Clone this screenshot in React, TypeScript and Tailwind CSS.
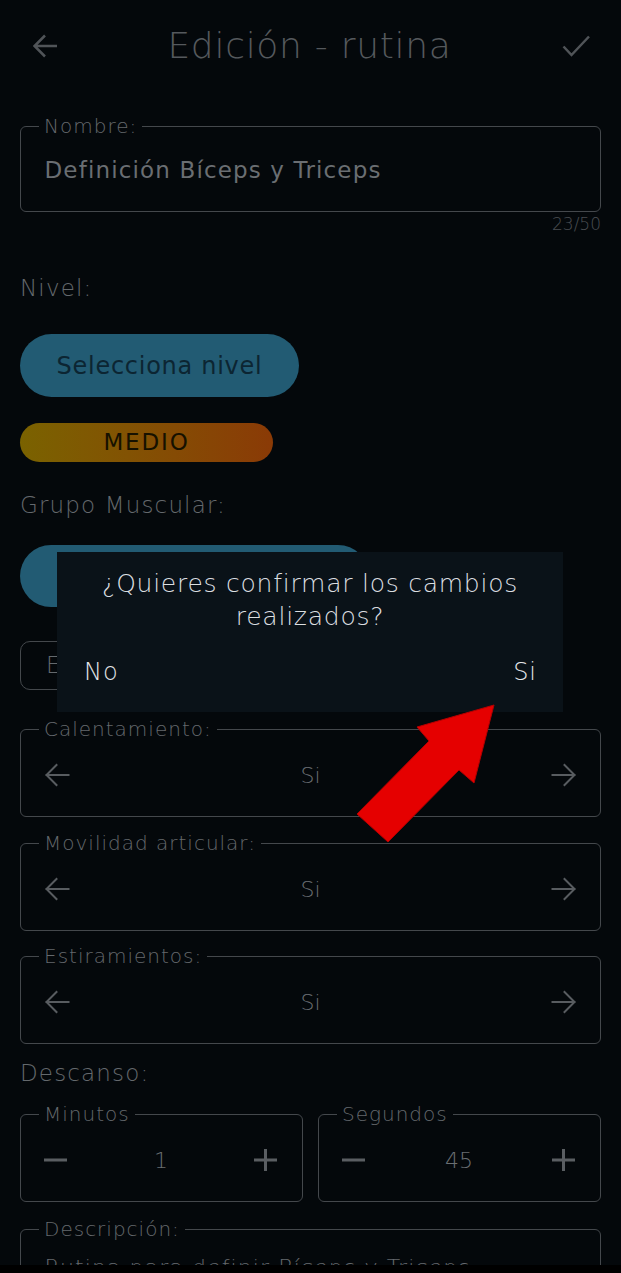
import type { ReactNode } from 'react';

const FONT = { fontFamily: '"DejaVu Sans", "Open Sans", sans-serif' };

function ArrowIcon({ dir, className }: { dir: 'left' | 'right'; className?: string }) {
  return (
    <svg viewBox="0 0 26 24" className={className} fill="none" stroke="currentColor" strokeWidth="2" strokeLinecap="square">
      {dir === 'left' ? (
        <path d="M2.5 12H24.5M12.5 2L2.5 12L12.5 22" />
      ) : (
        <path d="M23.5 12H1.5M13.5 2L23.5 12L13.5 22" />
      )}
    </svg>
  );
}

function Field({ label, children, className }: { label: string; children: ReactNode; className?: string }) {
  return (
    <fieldset className={`rounded-[6px] border-[1.5px] border-[#44484c] ${className ?? ''}`}>
      <legend className="ml-[18px] px-[5px] text-[20px] leading-[24px] font-extralight tracking-[0.05em] text-[#64696d]">
        {label}
      </legend>
      {children}
    </fieldset>
  );
}

function Toggle({ label, className }: { label: string; className?: string }) {
  return (
    <Field label={label} className={className}>
      <div className="mt-[19px] mb-[26px] flex h-[30px] items-center px-[23px] text-[#585c60]">
        <ArrowIcon dir="left" className="h-[24px] w-[26px]" />
        <span className="flex-1 text-center text-[22px] font-extralight text-[#6a6e72]">Si</span>
        <ArrowIcon dir="right" className="h-[24px] w-[26px]" />
      </div>
    </Field>
  );
}

function Stepper({ label, value }: { label: string; value: string }) {
  return (
    <Field label={label} className="flex-1">
      <div className="mt-[19px] mb-[26px] flex h-[30px] items-center pl-[23px] pr-[24px] text-[#5a5e62]">
        <svg viewBox="0 0 24 24" className="h-[24px] w-[24px]" stroke="currentColor" strokeWidth="3">
          <path d="M0 12H23" />
        </svg>
        <span className="flex-1 text-center text-[22px] font-extralight text-[#6a6e72]">{value}</span>
        <svg viewBox="0 0 24 24" className="h-[24px] w-[24px]" stroke="currentColor" strokeWidth="3">
          <path d="M0 12H23M11.5 1V23" />
        </svg>
      </div>
    </Field>
  );
}

export default function App() {
  return (
    <div style={FONT} className="relative flex h-[1273px] w-[621px] flex-col overflow-hidden bg-[#04080b]">
      <div className="flex-1 overflow-hidden">
        {/* header */}
        <header className="flex h-[92px] items-center justify-between px-[33px] text-[#505458]">
          <svg viewBox="0 0 24 24" className="h-[24px] w-[24px]" fill="none" stroke="currentColor" strokeWidth="2.5">
            <path d="M1.5 12H24M12 1.5L1.5 12L12 22.5" />
          </svg>
          <h1 className="text-[36px] font-extralight tracking-[0.02em] text-[#55595d]">Edición - rutina</h1>
          <svg viewBox="0 0 28 22" className="-mr-[2px] h-[22px] w-[28px]" fill="none" stroke="currentColor" strokeWidth="2.5">
            <path d="M1.5 11.5L9.5 20L27 1.5" />
          </svg>
        </header>

        <main className="flex flex-col px-[20px]">
          <Field label="Nombre:" className="mt-[22px]">
            <div className="mt-[17px] mb-[26px] pl-[23.5px] text-[23px] leading-[30px] tracking-[0.05em] text-[#6a6e72]">
              Definición Bíceps y Triceps
            </div>
          </Field>
          <div className="mt-[2px] text-right text-[17px] leading-[20px] font-extralight text-[#4a4e52]">23/50</div>

          <div className="mt-[40px] text-[23px] leading-[28px] font-extralight tracking-[0.05em] text-[#64696d]">Nivel:</div>
          <button className="mt-[32px] flex h-[63px] w-[279px] items-center justify-center rounded-full bg-[#225b73] text-[24px] tracking-[0.03em] text-[#0c2532]">
            Selecciona nivel
          </button>
          <div className="mt-[26px] flex h-[39px] w-[253px] items-center justify-center rounded-full bg-gradient-to-r from-[#7a6200] to-[#8a3a06] text-[23px] tracking-[0.08em] text-[#161100]">
            MEDIO
          </div>

          <div className="mt-[29px] text-[23px] leading-[28px] font-extralight tracking-[0.05em] text-[#64696d]">Grupo Muscular:</div>
          <div className="mt-[26px] h-[62px] w-[349px] rounded-full bg-[#225b73]" />
          <div className="mt-[34px] flex h-[49px] w-[280px] items-center rounded-[10px] border-[1.5px] border-[#44484c] pl-[25px] text-[23px] font-extralight text-[#64696d]">
            E
          </div>

          <Toggle label="Calentamiento:" className="mt-[27px]" />
          <Toggle label="Movilidad articular:" className="mt-[14px]" />
          <Toggle label="Estiramientos:" className="mt-[13px]" />

          <div className="mt-[15px] text-[23px] leading-[28px] font-extralight tracking-[0.05em] text-[#64696d]">Descanso:</div>
          <div className="mt-[15px] flex gap-[15px]">
            <Stepper label="Minutos" value="1" />
            <Stepper label="Segundos" value="45" />
          </div>

          <Field label="Descripción:" className="mt-[15px]">
            <div className="mt-[12px] mb-[26px] pl-[23.5px] text-[22px] leading-[30px] font-extralight tracking-[0.05em] text-[#64696d]">
              Rutina para definir Bíceps y Triceps
            </div>
          </Field>
        </main>
      </div>
      <div className="h-[8px] shrink-0 bg-black" />

      {/* confirm dialog */}
      <div className="absolute left-[57px] top-[552px] flex h-[160px] w-[506px] flex-col bg-[#0a1218] pt-[15px]">
        <p className="px-[16px] text-center text-[25px] leading-[33px] font-extralight tracking-[0.03em] text-[#dcdfe1]">
          ¿Quieres confirmar los cambios realizados?
        </p>
        <div className="mt-[24px] flex items-center justify-between pl-[27px] pr-[26px] text-[24px] leading-[30px] font-extralight tracking-[0.04em] text-[#e4e6e8]">
          <button>No</button>
          <button>Si</button>
        </div>
      </div>

      {/* annotation arrow */}
      <svg viewBox="0 0 150 150" className="absolute left-[350px] top-[700px] h-[150px] w-[150px]">
        <polygon points="144,5 67,27 79,41 7,114 38,142 109,70 124,83" fill="#e50000" stroke="#b40000" strokeWidth="1" />
      </svg>
    </div>
  );
}
